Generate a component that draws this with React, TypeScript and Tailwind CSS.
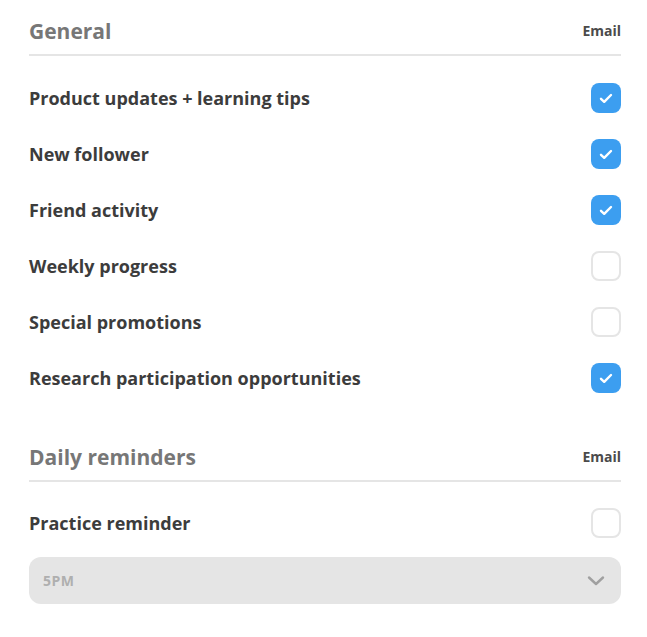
import { useState } from 'react'

const GENERAL = [
  { label: 'Product updates + learning tips', on: true },
  { label: 'New follower', on: true },
  { label: 'Friend activity', on: true },
  { label: 'Weekly progress', on: false },
  { label: 'Special promotions', on: false },
  { label: 'Research participation opportunities', on: true },
]

function Checkbox({ checked, onChange }: { checked: boolean; onChange: () => void }) {
  return (
    <button
      onClick={onChange}
      className={
        checked
          ? 'w-[30px] h-[30px] rounded-[8px] bg-[#3c9ef0] flex items-center justify-center'
          : 'w-[30px] h-[30px] rounded-[8px] border-2 border-[#e5e5e5] bg-white'
      }
    >
      {checked && (
        <svg width="14" height="11" viewBox="0 0 14 11" fill="none">
          <path d="M2 5.8l3.2 3L12 2" stroke="white" strokeWidth="2.4" strokeLinecap="round" strokeLinejoin="round" />
        </svg>
      )}
    </button>
  )
}

function SectionHeader({ title }: { title: string }) {
  return (
    <div className="flex items-center justify-between border-b-2 border-[#e5e5e5] h-[48px]">
      <h2 className="text-[21px] font-bold text-[#777777] leading-none">{title}</h2>
      <span className="text-[14px] font-bold text-[#4b4b4b] leading-none">Email</span>
    </div>
  )
}

export default function App() {
  const [general, setGeneral] = useState(GENERAL.map(g => g.on))
  const [practice, setPractice] = useState(false)

  return (
    <main className="min-h-screen bg-white pl-[29px] pr-[26px] pt-[8px] text-[#3c3c3c]" style={{ fontFamily: '"Open Sans", "DejaVu Sans", sans-serif' }}>
      <SectionHeader title="General" />
      <div className="pt-[14px]">
        {GENERAL.map((g, i) => (
          <div key={g.label} className="flex items-center justify-between h-[56px]">
            <span className="text-[18px] font-bold text-[#3c3c3c]">{g.label}</span>
            <Checkbox
              checked={general[i]}
              onChange={() => setGeneral(general.map((v, j) => (j === i ? !v : v)))}
            />
          </div>
        ))}
      </div>

      <div className="mt-[28px]">
        <SectionHeader title="Daily reminders" />
        <div className="flex items-center justify-between h-[56px] mt-[13px]">
          <span className="text-[18px] font-bold text-[#3c3c3c]">Practice reminder</span>
          <Checkbox checked={practice} onChange={() => setPractice(!practice)} />
        </div>
        {/* time picker */}
        <div className="mt-[6px] h-[47px] rounded-[12px] bg-[#e5e5e5] flex items-center justify-between pl-[14px] pr-[16px]">
          <span className="text-[14px] font-bold text-[#afafaf] tracking-[0.5px]">5PM</span>
          <svg width="18" height="11" viewBox="0 0 18 11" fill="none">
            <path d="M2 2.5l7 6.5 7-6.5" stroke="#a0a0a0" strokeWidth="2.4" strokeLinecap="round" strokeLinejoin="round" />
          </svg>
        </div>
      </div>
    </main>
  )
}
